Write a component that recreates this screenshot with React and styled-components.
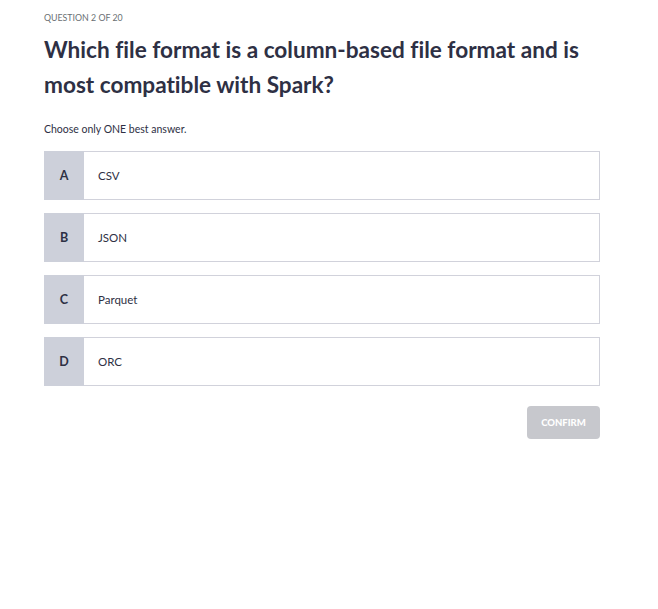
import React from "react";
import styled, { createGlobalStyle } from "styled-components";

const Global = createGlobalStyle`
  html, body { margin: 0; padding: 0; background: #fff; }
  body {
    font-family: "Source Sans Pro", Lato, "Open Sans", sans-serif;
    color: #2d2f3f;
    font-variant-ligatures: none;
  }
`;

const Page = styled.div`
  width: 556px;
  padding: 11px 0 0 44px;
`;

const Label = styled.div`
  font-size: 8.8px;
  color: #6a6f73;
  text-transform: uppercase;
  line-height: 14px;
`;

const Title = styled.h1`
  margin: 7px 0 0;
  font-size: 22.6px;
  font-weight: 700;
  line-height: 35px;
  color: #2e3044;
`;

const Hint = styled.p`
  margin: 20px 0 0;
  font-size: 10.5px;
  line-height: 14px;
  color: #2e3044;
`;

const Options = styled.div`
  margin-top: 15px;
  display: flex;
  flex-direction: column;
  gap: 13px;
`;

const Option = styled.div`
  display: flex;
  height: 49px;
  box-sizing: border-box;
  border: 1px solid #d1d2db;
  background: #fff;
`;

const Letter = styled.div`
  width: 40px;
  flex: none;
  margin: -1px 0 -1px -1px;
  background: #cdd0da;
  display: flex;
  align-items: center;
  justify-content: center;
  font-size: 12.5px;
  font-weight: 700;
  color: #2e3044;
`;

const OptionText = styled.div`
  display: flex;
  align-items: center;
  padding-left: 14px;
  font-size: 11.5px;
  color: #2e3044;
`;

const Actions = styled.div`
  display: flex;
  justify-content: flex-end;
  margin-top: 20px;
`;

const Confirm = styled.button`
  width: 73px;
  height: 33px;
  border: none;
  border-radius: 4px;
  background: #c7c8cd;
  color: #fff;
  font-family: inherit;
  font-size: 9.5px;
  font-weight: 900;
  text-transform: uppercase;
  cursor: not-allowed;
`;

const options = [
  ["A", "CSV"],
  ["B", "JSON"],
  ["C", "Parquet"],
  ["D", "ORC"],
];

export default function App() {
  return (
    <>
      <Global />
      <Page>
        <Label>Question 2 of 20</Label>
        <Title>
          Which file format is a column-based file format and is most compatible with Spark?
        </Title>
        <Hint>Choose only ONE best answer.</Hint>
        <Options>
          {options.map(([l, t]) => (
            <Option key={l}>
              <Letter>{l}</Letter>
              <OptionText>{t}</OptionText>
            </Option>
          ))}
        </Options>
        <Actions>
          <Confirm disabled>Confirm</Confirm>
        </Actions>
      </Page>
    </>
  );
}
